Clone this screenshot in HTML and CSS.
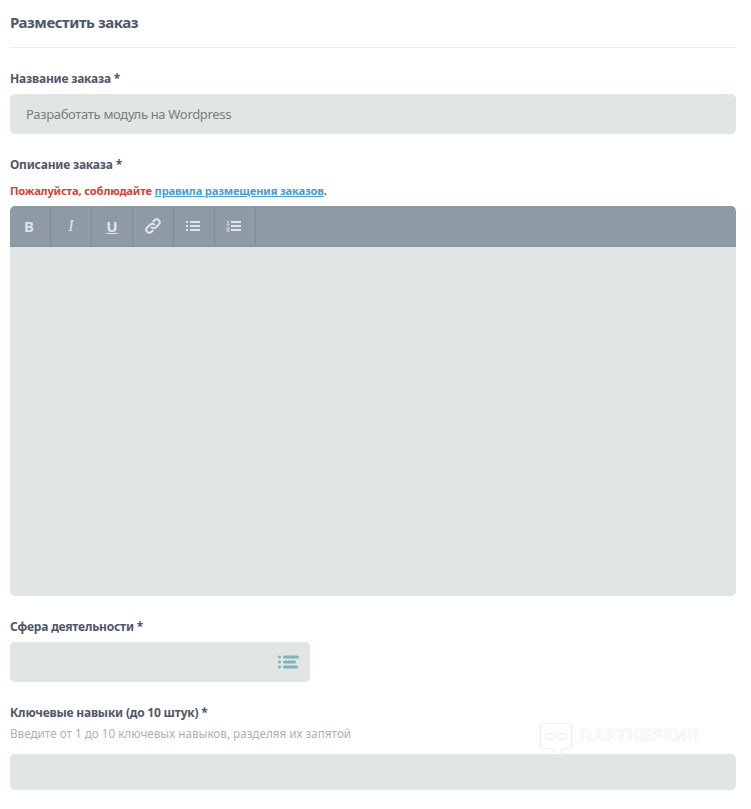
FILE: index.html
```html
<!DOCTYPE html>
<html lang="ru">
<head>
<meta charset="utf-8">
<title>Разместить заказ</title>
<link rel="stylesheet" href="styles.css">
</head>
<body>
<main class="page">
  <h1 class="title">Разместить заказ</h1>
  <form class="form">
    <div class="field">
      <label class="label">Название заказа *</label>
      <div class="input input-text">Разработать модуль на Wordpress</div>
    </div>
    <div class="field">
      <label class="label">Описание заказа *</label>
      <p class="warning">Пожалуйста, соблюдайте <a href="#" class="rules">правила размещения заказов</a><span class="dot">.</span></p>
      <div class="editor">
        <div class="toolbar">
          <div class="tool tool-b">B</div>
          <div class="tool tool-i">I</div>
          <div class="tool tool-u">U</div>
          <div class="tool">
            <svg width="18" height="18" viewBox="0 0 18 18" fill="none" stroke="#dfe4e6" stroke-width="2" stroke-linecap="round"><path d="M7.600 10.400a3 3 0 0 0 4.300 0l2.900-2.900a3 3 0 0 0-4.300-4.300L9.400 4.300"/><path d="M10.400 7.600a3 3 0 0 0-4.300 0l-2.900 2.900a3 3 0 0 0 4.300 4.300l1.100-1.100"/></svg>
          </div>
          <div class="tool tool-list">
            <svg width="14" height="12" viewBox="0 0 14 12" fill="#dfe4e6"><rect x="0" y="1" width="2" height="2"/><rect x="0" y="5" width="2" height="2"/><rect x="0" y="9" width="2" height="2"/><rect x="4" y="1" width="10" height="2"/><rect x="4" y="5" width="10" height="2"/><rect x="4" y="9" width="10" height="2"/></svg>
          </div>
          <div class="tool tool-list">
            <svg width="15" height="12" viewBox="0 0 15 12" fill="#dfe4e6"><rect x="1.500" y="0.500" width="1" height="4"/><rect x="0.500" y="4.500" width="3" height="1"/><rect x="0.500" y="7.500" width="3" height="1"/><rect x="2.500" y="8.500" width="1" height="1"/><rect x="0.500" y="9.500" width="2" height="1"/><rect x="0.500" y="10.500" width="3" height="1"/><rect x="5" y="1" width="10" height="2"/><rect x="5" y="5" width="10" height="2"/><rect x="5" y="9" width="10" height="2"/></svg>
          </div>
        </div>
        <div class="editor-body"></div>
      </div>
    </div>
    <div class="field">
      <label class="label">Сфера деятельности *</label>
      <div class="input input-select">
        <svg width="21" height="14" viewBox="0 0 21 14" fill="#7fb3b5"><circle cx="1.500" cy="2" r="1.500"/><circle cx="1.500" cy="7" r="1.500"/><circle cx="1.500" cy="12" r="1.500"/><rect x="5" y="0.500" width="16" height="3" rx="1.500"/><rect x="5" y="5.500" width="13" height="3" rx="1.500"/><rect x="5" y="10.500" width="15" height="3" rx="1.500"/></svg>
      </div>
    </div>
    <div class="field">
      <label class="label">Ключевые навыки (до 10 штук) *</label>
      <p class="hint">Введите от 1 до 10 ключевых навыков, разделяя их запятой</p>
      <div class="input input-skills"></div>
    </div>
  </form>
  <div class="watermark">
    <svg class="watermark-logo" width="33" height="35" viewBox="0 0 33 35" fill="none" stroke="#efefef" stroke-width="1"><path d="M3 .5h26a2.500 2.500 0 0 1 2.500 2.500v20a2.500 2.500 0 0 1-2.500 2.500h-7l-.5 8-2 1-8-9H3A2.500 2.500 0 0 1 .5 23V3A2.500 2.500 0 0 1 3 .5z"/><rect x="5" y="10.500" width="10" height="6" rx="3"/><rect x="17" y="10.500" width="10" height="6" rx="3"/><path d="M15 13h2"/></svg>
    <span class="watermark-text">ПАРТНЕРКИН</span>
  </div>
</main>
</body>
</html>
```

FILE: styles.css
```css
* {
  box-sizing: border-box;
}

html,
body {
  margin: 0;
  padding: 0;
  background: #fff;
}

body {
  font-family: "Noto Sans", "Open Sans", sans-serif;
  height: 809px;
  overflow: hidden;
}

.page {
  position: relative;
  height: 809px;
  padding: 0 15px 0 10px;
}

.title {
  height: 48px;
  margin: 0;
  padding-top: 12px;
  border-bottom: 1px solid #eceeef;
  color: #4b5a6b;
  font-size: 15px;
  line-height: 20px;
  font-weight: 700;
  letter-spacing: -0.45px;
}

.form {
  display: flex;
  flex-direction: column;
}

.field {
  display: flex;
  flex-direction: column;
  padding-top: 23px;
}

.label {
  display: block;
  height: 16px;
  margin-bottom: 7px;
  color: #4f5866;
  font-size: 12px;
  line-height: 16px;
  font-weight: 700;
  letter-spacing: -0.2px;
}

.input {
  background: #dfe6e4;
  border-radius: 5px;
}

.input-text {
  height: 40px;
  padding-left: 16px;
  color: #757f80;
  font-size: 13px;
  line-height: 40px;
  letter-spacing: -0.32px;
}

.warning {
  height: 16px;
  margin: 3px 0 0;
  color: #cf4436;
  font-size: 11.200px;
  line-height: 16px;
  font-weight: 700;
  letter-spacing: -0.19px;
}

.rules {
  color: #4a9bd0;
  text-decoration: underline;
}

.dot {
  color: #4f5866;
}

.editor {
  margin-top: 7px;
}

.toolbar {
  display: flex;
  height: 41px;
  background: #8e9aa6;
  border-radius: 5px 5px 0 0;
  border-bottom: 1px solid #87939f;
}

.tool {
  display: flex;
  align-items: center;
  justify-content: center;
  width: 41px;
  height: 40px;
  border-right: 1px solid #808c98;
  color: #dfe4e6;
  font-size: 15px;
}

.tool-b {
  font-weight: 700;
  padding-right: 2px;
}

.tool-i {
  font-family: "Liberation Serif", serif;
  font-style: italic;
  font-size: 16px;
}

.tool-u {
  font-weight: 700;
  text-decoration: underline;
}

.tool-list {
  padding-right: 3px;
}

.editor-body {
  height: 349px;
  background: #dfe6e4;
  border-radius: 0 0 5px 5px;
}

.input-select {
  display: flex;
  align-items: center;
  justify-content: flex-end;
  width: 300px;
  height: 40px;
  padding-right: 11px;
}

.hint {
  height: 16px;
  margin: -3px 0 0;
  color: #a9b2b8;
  font-size: 11.700px;
  line-height: 16px;
}

.input-skills {
  height: 36px;
  margin-top: 13px;
}

.watermark {
  position: absolute;
  left: 540px;
  top: 723px;
  display: flex;
  align-items: flex-start;
  gap: 7px;
}

.watermark-text {
  margin-top: 3px;
  color: #fff;
  -webkit-text-stroke: 0.6px #ededed;
  font-family: "Liberation Sans", sans-serif;
  font-size: 16px;
  font-weight: 700;
  line-height: 20px;
  letter-spacing: 1.100px;
}
```
